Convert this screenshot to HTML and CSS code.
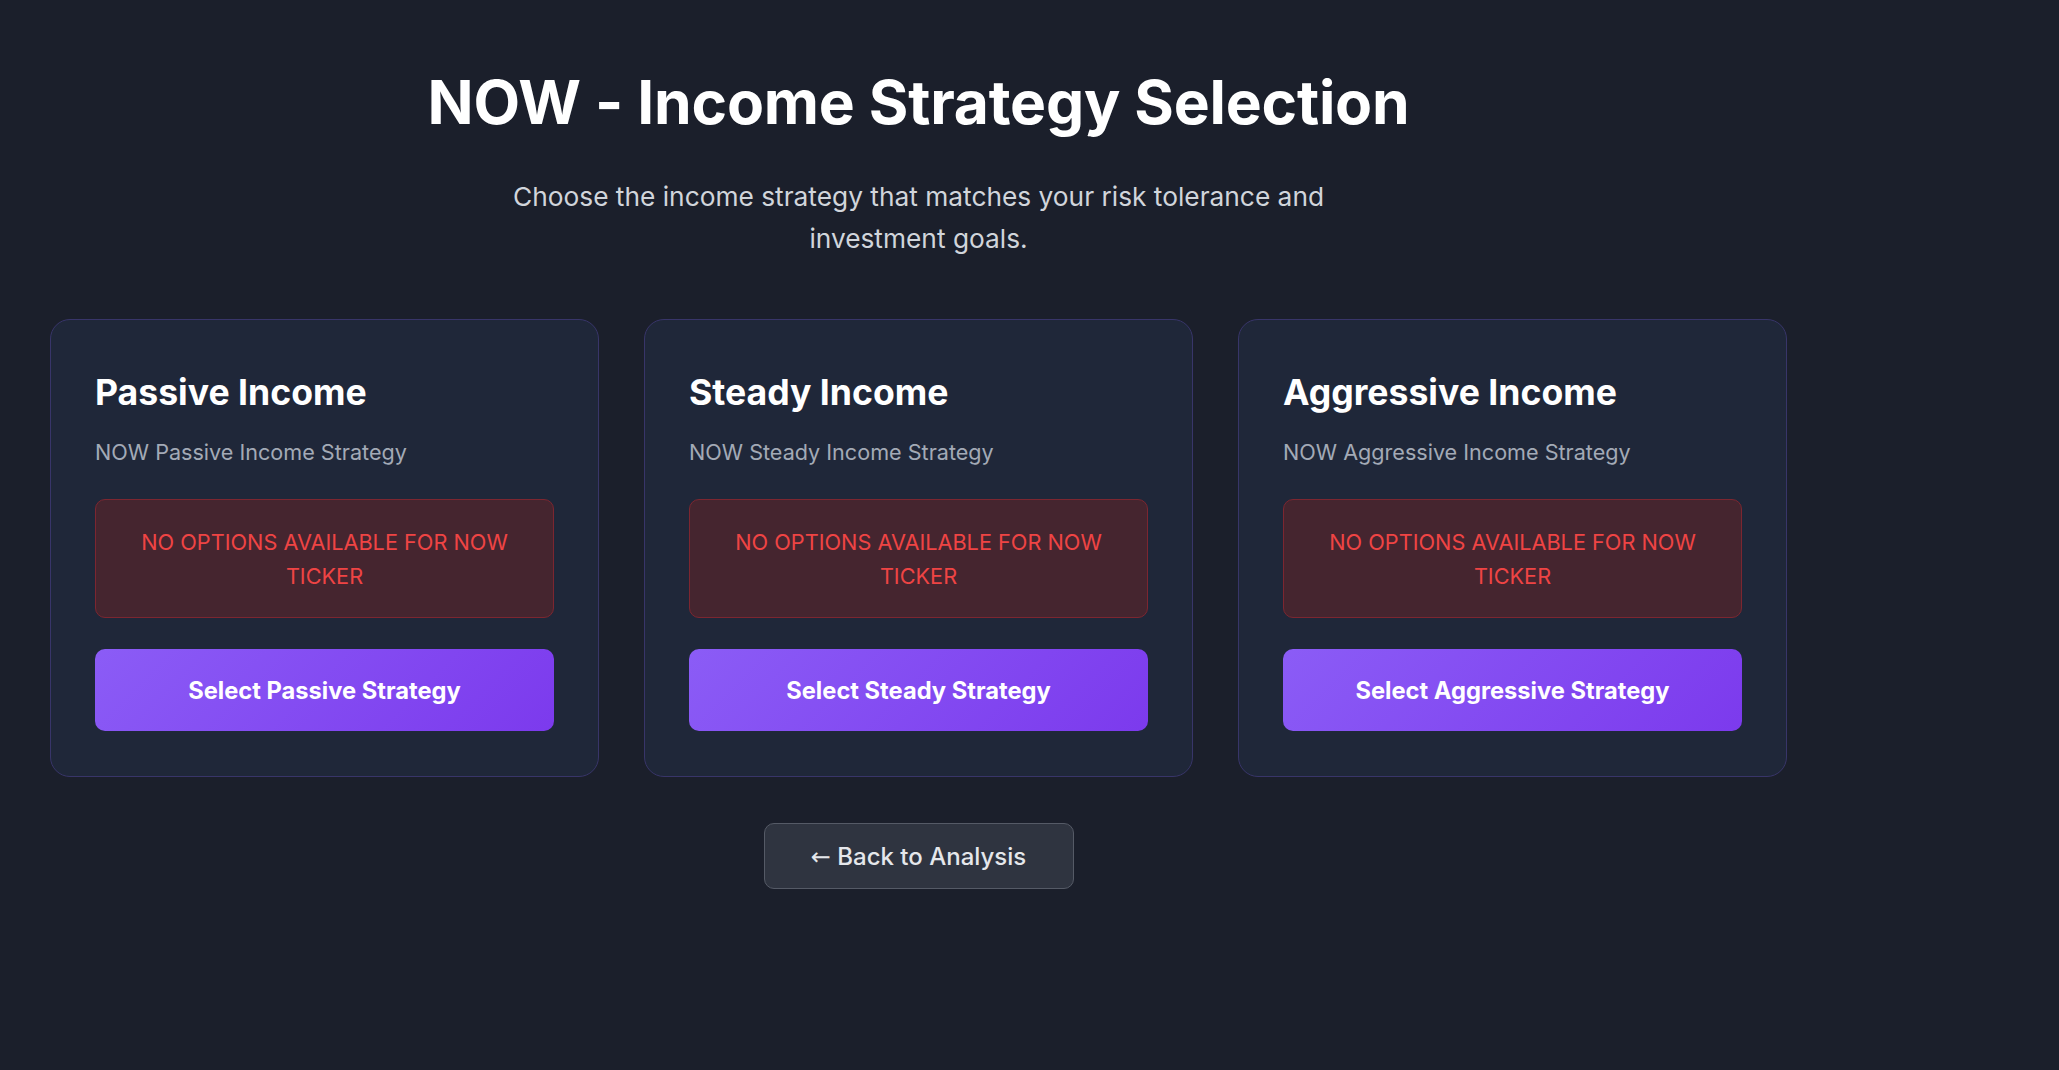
FILE: index.html
```html
<!DOCTYPE html>
<html lang="en">
<head>
<meta charset="utf-8">
<title>NOW - Income Strategy Selection</title>
<link rel="stylesheet" href="styles.css">
</head>
<body>
<main class="page">
  <header class="intro">
    <h1 class="title">NOW - Income Strategy Selection</h1>
    <p class="lead">Choose the income strategy that matches your risk tolerance and investment goals.</p>
  </header>
  <section class="cards">
    <article class="card">
      <h2 class="card-title">Passive Income</h2>
      <p class="card-sub">NOW Passive Income Strategy</p>
      <div class="alert">NO OPTIONS AVAILABLE FOR NOW TICKER</div>
      <button class="select-btn">Select Passive Strategy</button>
    </article>
    <article class="card">
      <h2 class="card-title">Steady Income</h2>
      <p class="card-sub">NOW Steady Income Strategy</p>
      <div class="alert">NO OPTIONS AVAILABLE FOR NOW TICKER</div>
      <button class="select-btn">Select Steady Strategy</button>
    </article>
    <article class="card">
      <h2 class="card-title">Aggressive Income</h2>
      <p class="card-sub">NOW Aggressive Income Strategy</p>
      <div class="alert">NO OPTIONS AVAILABLE FOR NOW TICKER</div>
      <button class="select-btn">Select Aggressive Strategy</button>
    </article>
  </section>
  <div class="back-row">
    <button class="back-btn"><span class="arrow">←</span> Back to Analysis</button>
  </div>
</main>
</body>
</html>
```

FILE: styles.css
```css
* { box-sizing: border-box; }

html, body {
  margin: 0;
  padding: 0;
  background: #1b1f2b;
  height: 100%;
}

body {
  font-family: Inter, "Noto Sans", sans-serif;
  color: #ffffff;
}

.page {
  width: 1737px;
  margin-left: 50px;
  padding-top: 66px;
}

.intro {
  display: flex;
  flex-direction: column;
  align-items: center;
  text-align: center;
}

.title {
  margin: 0;
  font-size: 60.5px;
  line-height: 72px;
  font-weight: 700;
  color: #ffffff;
  letter-spacing: -0.2px;
}

.lead {
  margin: 38px 0 0;
  max-width: 880px;
  font-size: 26.3px;
  line-height: 42px;
  color: #d1d5db;
}

.cards {
  margin-top: 59px;
  display: grid;
  grid-template-columns: repeat(3, 549px);
  gap: 45px;
}

.card {
  background: #1f2739;
  border: 1px solid #383569;
  border-radius: 20px;
  padding: 44px 44px 45px;
  display: flex;
  flex-direction: column;
}

.card-title {
  margin: 0;
  font-size: 35.6px;
  line-height: 58px;
  font-weight: 700;
  color: #ffffff;
}

.card-sub {
  margin: 13px 0 0;
  font-size: 21.6px;
  line-height: 35px;
  color: #a3aab6;
}

.alert {
  margin-top: 29px;
  height: 119px;
  display: flex;
  align-items: center;
  justify-content: center;
  text-align: center;
  padding: 0 36px;
  background: #45252f;
  border: 1px solid #7c2630;
  border-radius: 10px;
  color: #ef4444;
  font-size: 21.7px;
  line-height: 34px;
  font-weight: 400;
}

.select-btn {
  margin-top: 31px;
  height: 82px;
  border: none;
  border-radius: 10px;
  background: linear-gradient(135deg, #8b5cf6 0%, #7c3aed 100%);
  color: #ffffff;
  font-family: inherit;
  font-size: 23.7px;
  font-weight: 700;
}

.back-row {
  margin-top: 46px;
  display: flex;
  justify-content: center;
}

.back-btn {
  width: 310px;
  height: 66px;
  background: #2f3440;
  border: 1px solid #555a66;
  border-radius: 10px;
  color: #e5e7eb;
  font-family: inherit;
  font-size: 24px;
  font-weight: 500;
}

.arrow {
  font-family: "DejaVu Sans", sans-serif;
  font-weight: 400;
}
```
